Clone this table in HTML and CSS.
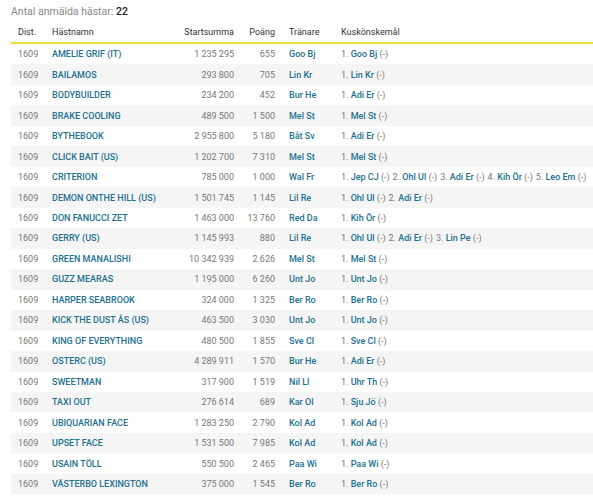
FILE: index.html
```html
<!DOCTYPE html>
<html>
<head>
<meta charset="utf-8">
<link rel="stylesheet" href="styles.css">
</head>
<body>
<div class="page">
  <div class="count">Antal anmälda hästar: <b>22</b></div>
  <table class="starts">
    <colgroup>
      <col class="c-dist"><col class="c-name"><col class="c-sum"><col class="c-pts"><col class="c-tr"><col class="c-wish">
    </colgroup>
    <thead>
      <tr>
        <th class="dist">Dist.</th>
        <th>Hästnamn</th>
        <th class="num">Startsumma</th>
        <th class="num">Poäng</th>
        <th class="tr">Tränare</th>
        <th>Kuskönskemål</th>
      </tr>
    </thead>
    <tbody>
      <tr><td class="dist">1609</td><td><a>AMELIE GRIF (IT)</a></td><td class="num">1 235 295</td><td class="num">655</td><td class="tr"><a>Goo Bj</a></td><td><span class="w">1. <a>Goo Bj</a> (-)</span></td></tr>
      <tr><td class="dist">1609</td><td><a>BAILAMOS</a></td><td class="num">293 800</td><td class="num">705</td><td class="tr"><a>Lin Kr</a></td><td><span class="w">1. <a>Lin Kr</a> (-)</span></td></tr>
      <tr><td class="dist">1609</td><td><a>BODYBUILDER</a></td><td class="num">234 200</td><td class="num">452</td><td class="tr"><a>Bur He</a></td><td><span class="w">1. <a>Adi Er</a> (-)</span></td></tr>
      <tr><td class="dist">1609</td><td><a>BRAKE COOLING</a></td><td class="num">489 500</td><td class="num">1 500</td><td class="tr"><a>Mel St</a></td><td><span class="w">1. <a>Mel St</a> (-)</span></td></tr>
      <tr><td class="dist">1609</td><td><a>BYTHEBOOK</a></td><td class="num">2 955 800</td><td class="num">5 180</td><td class="tr"><a>Båt Sv</a></td><td><span class="w">1. <a>Adi Er</a> (-)</span></td></tr>
      <tr><td class="dist">1609</td><td><a>CLICK BAIT (US)</a></td><td class="num">1 202 700</td><td class="num">7 310</td><td class="tr"><a>Mel St</a></td><td><span class="w">1. <a>Mel St</a> (-)</span></td></tr>
      <tr><td class="dist">1609</td><td><a>CRITERION</a></td><td class="num">785 000</td><td class="num">1 000</td><td class="tr"><a>Wal Fr</a></td><td><span class="w">1. <a>Jep CJ</a> (-)</span><span class="w">2. <a>Ohl Ul</a> (-)</span><span class="w">3. <a>Adi Er</a> (-)</span><span class="w">4. <a>Kih Ör</a> (-)</span><span class="w">5. <a>Leo Em</a> (-)</span></td></tr>
      <tr><td class="dist">1609</td><td><a>DEMON ONTHE HILL (US)</a></td><td class="num">1 501 745</td><td class="num">1 145</td><td class="tr"><a>Lil Re</a></td><td><span class="w">1. <a>Ohl Ul</a> (-)</span><span class="w">2. <a>Adi Er</a> (-)</span></td></tr>
      <tr><td class="dist">1609</td><td><a>DON FANUCCI ZET</a></td><td class="num">1 463 000</td><td class="num">13 760</td><td class="tr"><a>Red Da</a></td><td><span class="w">1. <a>Kih Ör</a> (-)</span></td></tr>
      <tr><td class="dist">1609</td><td><a>GERRY (US)</a></td><td class="num">1 145 993</td><td class="num">880</td><td class="tr"><a>Lil Re</a></td><td><span class="w">1. <a>Ohl Ul</a> (-)</span><span class="w">2. <a>Adi Er</a> (-)</span><span class="w">3. <a>Lin Pe</a> (-)</span></td></tr>
      <tr><td class="dist">1609</td><td><a>GREEN MANALISHI</a></td><td class="num">10 342 939</td><td class="num">2 626</td><td class="tr"><a>Mel St</a></td><td><span class="w">1. <a>Mel St</a> (-)</span></td></tr>
      <tr><td class="dist">1609</td><td><a>GUZZ MEARAS</a></td><td class="num">1 195 000</td><td class="num">6 260</td><td class="tr"><a>Unt Jo</a></td><td><span class="w">1. <a>Unt Jo</a> (-)</span></td></tr>
      <tr><td class="dist">1609</td><td><a>HARPER SEABROOK</a></td><td class="num">324 000</td><td class="num">1 325</td><td class="tr"><a>Ber Ro</a></td><td><span class="w">1. <a>Ber Ro</a> (-)</span></td></tr>
      <tr><td class="dist">1609</td><td><a>KICK THE DUST ÅS (US)</a></td><td class="num">463 500</td><td class="num">3 030</td><td class="tr"><a>Unt Jo</a></td><td><span class="w">1. <a>Unt Jo</a> (-)</span></td></tr>
      <tr><td class="dist">1609</td><td><a>KING OF EVERYTHING</a></td><td class="num">480 500</td><td class="num">1 855</td><td class="tr"><a>Sve Cl</a></td><td><span class="w">1. <a>Sve Cl</a> (-)</span></td></tr>
      <tr><td class="dist">1609</td><td><a>OSTERC (US)</a></td><td class="num">4 289 911</td><td class="num">1 570</td><td class="tr"><a>Bur He</a></td><td><span class="w">1. <a>Adi Er</a> (-)</span></td></tr>
      <tr><td class="dist">1609</td><td><a>SWEETMAN</a></td><td class="num">317 900</td><td class="num">1 519</td><td class="tr"><a>Nil Ll</a></td><td><span class="w">1. <a>Uhr Th</a> (-)</span></td></tr>
      <tr><td class="dist">1609</td><td><a>TAXI OUT</a></td><td class="num">276 614</td><td class="num">689</td><td class="tr"><a>Kar Ol</a></td><td><span class="w">1. <a>Sju Jö</a> (-)</span></td></tr>
      <tr><td class="dist">1609</td><td><a>UBIQUARIAN FACE</a></td><td class="num">1 283 250</td><td class="num">2 790</td><td class="tr"><a>Kol Ad</a></td><td><span class="w">1. <a>Kol Ad</a> (-)</span></td></tr>
      <tr><td class="dist">1609</td><td><a>UPSET FACE</a></td><td class="num">1 531 500</td><td class="num">7 985</td><td class="tr"><a>Kol Ad</a></td><td><span class="w">1. <a>Kol Ad</a> (-)</span></td></tr>
      <tr><td class="dist">1609</td><td><a>USAIN TÖLL</a></td><td class="num">550 500</td><td class="num">2 465</td><td class="tr"><a>Paa Wi</a></td><td><span class="w">1. <a>Paa Wi</a> (-)</span></td></tr>
      <tr><td class="dist">1609</td><td><a>VÄSTERBO LEXINGTON</a></td><td class="num">375 000</td><td class="num">1 545</td><td class="tr"><a>Ber Ro</a></td><td><span class="w">1. <a>Ber Ro</a> (-)</span></td></tr>
    </tbody>
  </table>
</div>
</body>
</html>
```

FILE: styles.css
```css
html, body {
  margin: 0;
  padding: 0;
  background: #fff;
}
body {
  font-family: Roboto, "Open Sans", sans-serif;
  font-size: 9px;
  color: #777;
}
.page {
  padding: 4px 0 0 11px;
}
.count {
  font-size: 10.5px;
  color: #888;
  line-height: 15px;
}
.count b {
  color: #222;
  font-weight: 500;
}
.starts {
  border-collapse: collapse;
  table-layout: fixed;
  width: 582px;
  margin-top: 2px;
}
.c-dist { width: 41px; }
.c-name { width: 128px; }
.c-sum { width: 54px; }
.c-pts { width: 41px; }
.c-tr { width: 66px; }
.c-wish { width: 252px; }
.starts th {
  font-weight: 400;
  color: #333;
  text-align: left;
  height: 21px;
  padding: 0;
  border-bottom: 2px solid #f2dc3c;
  white-space: nowrap;
}
.starts td {
  height: 20.48px;
  padding: 0;
  white-space: nowrap;
}
.starts tbody tr:nth-child(even) td {
  background: #f5f5f5;
}
.starts a {
  color: #23708f;
  font-weight: 500;
}
.starts .dist {
  padding-left: 7px;
}
.starts .num {
  text-align: right;
}
.starts .tr {
  padding-left: 14px;
}
.w {
  margin-right: 3px;
}
```
